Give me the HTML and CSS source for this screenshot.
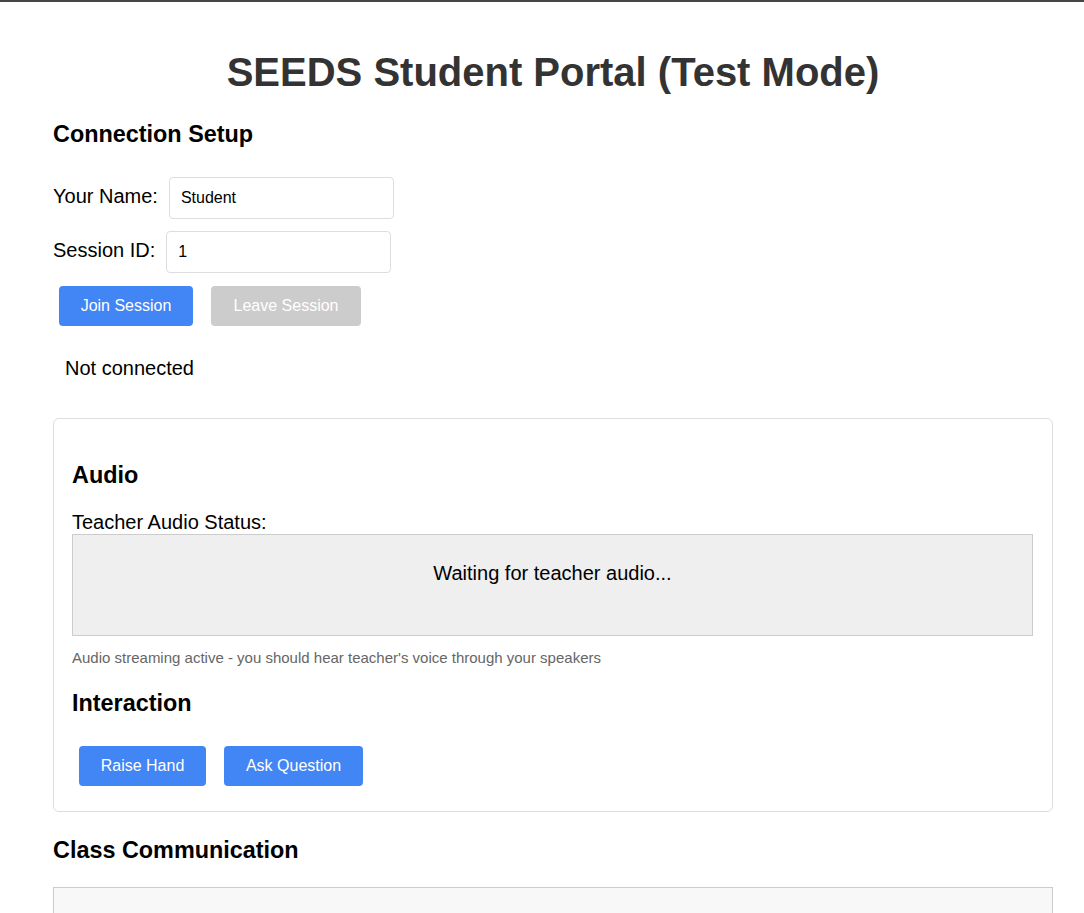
FILE: index.html
```html
<!DOCTYPE html>
<html lang="en">
<head>
<meta charset="utf-8">
<title>SEEDS Student Portal</title>
<link rel="stylesheet" href="styles.css">
</head>
<body>
<div class="topbar"></div>
<div class="container">
  <h1 class="title">SEEDS Student Portal (Test Mode)</h1>

  <section class="setup">
    <h3 class="section-title setup-title">Connection Setup</h3>
    <div class="field">
      <label class="field-label" for="name">Your Name:</label>
      <input class="text-input" id="name" type="text" value="Student">
    </div>
    <div class="field">
      <label class="field-label" for="session">Session ID:</label>
      <input class="text-input" id="session" type="text" value="1">
    </div>
    <div class="btn-row setup-buttons">
      <button class="btn btn-blue btn-join">Join Session</button>
      <button class="btn btn-gray btn-leave" disabled>Leave Session</button>
    </div>
    <div class="status">Not connected</div>
  </section>

  <section class="card">
    <h3 class="section-title audio-title">Audio</h3>
    <div class="audio-label">Teacher Audio Status:</div>
    <div class="audio-box">Waiting for teacher audio...</div>
    <p class="hint">Audio streaming active - you should hear teacher's voice through your speakers</p>
    <h3 class="section-title interaction-title">Interaction</h3>
    <div class="btn-row interaction-buttons">
      <button class="btn btn-blue btn-raise">Raise Hand</button>
      <button class="btn btn-blue btn-ask">Ask Question</button>
    </div>
  </section>

  <h3 class="section-title comm-title">Class Communication</h3>
  <div class="comm-box"></div>
</div>
</body>
</html>
```

FILE: styles.css
```css
html, body {
  margin: 0;
  padding: 0;
  background: #ffffff;
}

body {
  font-family: "Liberation Sans", Arial, sans-serif;
  font-size: 20px;
  color: #000;
}

.topbar {
  height: 2px;
  background: #464446;
}

.container {
  width: 1000px;
  margin-left: 53px;
}

.title {
  margin: 47px 0 0;
  font-size: 40px;
  line-height: 46px;
  font-weight: bold;
  color: #333333;
  text-align: center;
}

.section-title {
  margin: 0;
  font-size: 23.4px;
  line-height: 27px;
  font-weight: bold;
  color: #000;
}

.setup-title {
  margin-top: 26px;
}

.field {
  display: flex;
  align-items: center;
  gap: 11px;
  margin-top: 12px;
}

.setup-title + .field {
  margin-top: 29px;
}

.field-label {
  font-size: 20px;
  line-height: 23px;
  margin-bottom: 4px;
}

.text-input {
  box-sizing: border-box;
  width: 225px;
  height: 42px;
  padding: 0 11px;
  border: 1px solid #dddddd;
  border-radius: 4px;
  font-family: "Liberation Sans", Arial, sans-serif;
  font-size: 16px;
  color: #000;
  background: #fff;
  outline: none;
}

.btn-row {
  display: flex;
  gap: 18px;
}

.setup-buttons {
  margin-top: 13px;
  padding-left: 6px;
}

.btn {
  box-sizing: border-box;
  height: 40px;
  padding: 0 20px;
  border: none;
  border-radius: 4px;
  font-family: "Liberation Sans", Arial, sans-serif;
  font-size: 16px;
  line-height: 40px;
  color: #fff;
  cursor: pointer;
}

.btn-blue {
  background: #4285f4;
}

.btn-gray {
  background: #cccccc;
  color: #fff;
}

.btn-join { width: 134px; }
.btn-leave { width: 150px; }
.btn-raise { width: 127px; }
.btn-ask { width: 139px; }

.status {
  margin-top: 31px;
  padding-left: 12px;
  font-size: 20px;
  line-height: 23px;
}

.card {
  box-sizing: border-box;
  margin-top: 38px;
  border: 1px solid #dddddd;
  border-radius: 6px;
  padding: 43px 19px 25px 18px;
}

.audio-label {
  margin-top: 22px;
  font-size: 20px;
  line-height: 23px;
}

.audio-box {
  box-sizing: border-box;
  height: 102px;
  margin-top: 0;
  padding-top: 27px;
  border: 1px solid #cccccc;
  background: #efefef;
  text-align: center;
  font-size: 20px;
  line-height: 23px;
}

.hint {
  margin: 14px 0 0;
  font-size: 15px;
  line-height: 16px;
  color: #666666;
}

.interaction-title {
  margin-top: 24px;
}

.interaction-buttons {
  margin-top: 29px;
  padding-left: 7px;
}

.comm-title {
  margin-top: 25px;
}

.comm-box {
  box-sizing: border-box;
  height: 120px;
  margin-top: 23px;
  border: 1px solid #cccccc;
  background: #f8f8f8;
}
```
